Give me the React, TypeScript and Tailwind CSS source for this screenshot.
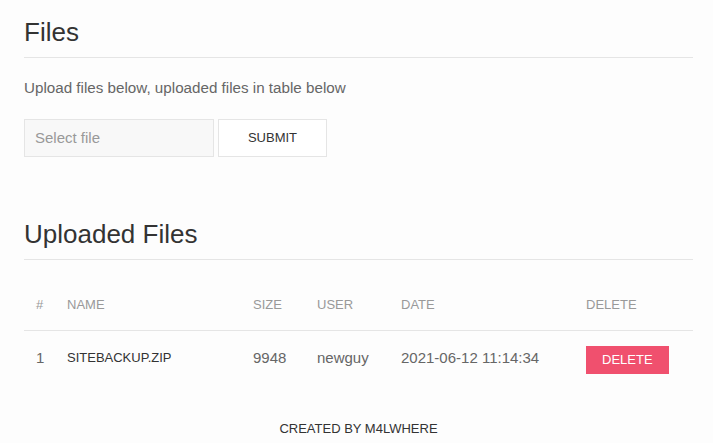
import type { ReactNode } from "react";

type Upload = {
	id: number;
	name: string;
	size: number;
	user: string;
	date: string;
};

const uploads: Upload[] = [
	{ id: 1, name: "sitebackup.zip", size: 9948, user: "newguy", date: "2021-06-12 11:14:34" },
];

const font = { fontFamily: '"Liberation Sans", Arial, sans-serif' };

function Heading({ children }: { children: ReactNode }) {
	return (
		<h2 className="text-[26px] leading-[1.2] text-[#333] pb-[9px] border-b border-[#e5e5e5]">
			{children}
		</h2>
	);
}

function Th({ children }: { children: ReactNode }) {
	return (
		<th className="px-3 py-4 text-left font-normal text-[13px] leading-[18px] uppercase text-[#999]">
			{children}
		</th>
	);
}

export default function App() {
	return (
		<div className="min-h-[443px] bg-[#fdfdfd]" style={font}>
			<div className="w-[669px] ml-6 pt-[17px]">
				<Heading>Files</Heading>
				<p className="mt-[19px] text-[15.2px] leading-[1.5] text-[#666]">
					Upload files below, uploaded files in table below
				</p>
				<form className="mt-[19px] flex gap-1" onSubmit={(e) => e.preventDefault()}>
					<input
						type="text"
						placeholder="Select file"
						className="w-[190px] h-[38px] px-[10px] bg-[#f8f8f8] border border-[#e5e5e5] text-[15px] text-[#666] placeholder:text-[#999] outline-none"
					/>
					<button
						type="submit"
						className="w-[109px] h-[38px] bg-white border border-[#e5e5e5] text-[13px] uppercase text-[#333]"
					>
						Submit
					</button>
				</form>

				<div className="mt-[62px]">
					<Heading>Uploaded Files</Heading>
				</div>
				<table className="mt-5 w-full table-fixed border-collapse">
					<colgroup>
						<col className="w-[31px]" />
						<col className="w-[186px]" />
						<col className="w-[64px]" />
						<col className="w-[84px]" />
						<col className="w-[185px]" />
						<col className="w-[119px]" />
					</colgroup>
					<thead>
						<tr className="border-b border-[#e5e5e5]">
							<Th>#</Th>
							<Th>Name</Th>
							<Th>Size</Th>
							<Th>User</Th>
							<Th>Date</Th>
							<Th>Delete</Th>
						</tr>
					</thead>
					<tbody>
						{uploads.map((f) => (
							<tr key={f.id} className="align-top">
								<td className="px-3 py-4 text-[15px] leading-[22px] text-[#666]">{f.id}</td>
								<td className="px-3 py-4 text-[13px] leading-[22px] uppercase text-[#333]">{f.name}</td>
								<td className="px-3 py-4 text-[15px] leading-[22px] text-[#666]">{f.size}</td>
								<td className="px-3 py-4 text-[15px] leading-[22px] text-[#666]">{f.user}</td>
								<td className="px-3 py-4 text-[15px] leading-[22px] text-[#666] whitespace-nowrap">{f.date}</td>
								<td className="px-3 py-[15px]">
									<button className="h-7 px-4 bg-[#f0506e] text-white text-[13px] uppercase">
										Delete
									</button>
								</td>
							</tr>
						))}
					</tbody>
				</table>
				<p className="mt-[30px] text-center text-[13px] uppercase text-[#333]">
					Created by m4lwhere
				</p>
			</div>
		</div>
	);
}
